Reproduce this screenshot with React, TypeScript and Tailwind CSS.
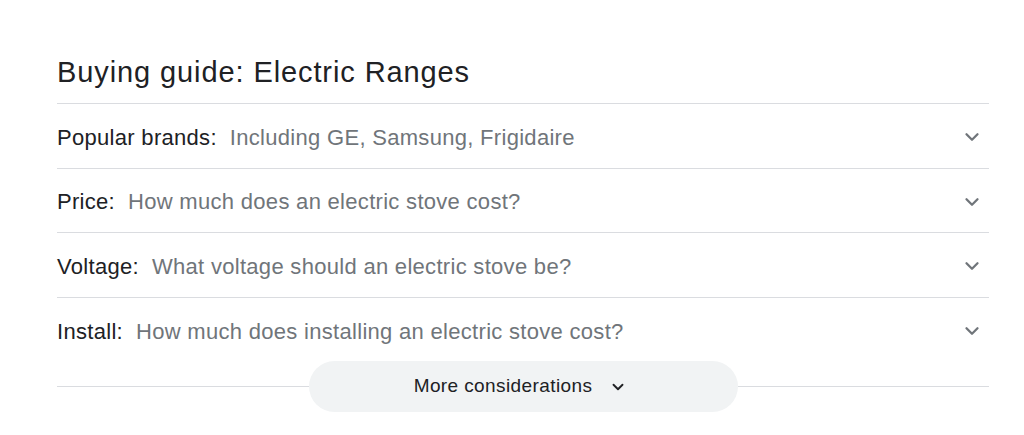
import { ChevronDown } from 'lucide-react';

const ROWS = [
  { label: 'Popular brands:', text: 'Including GE, Samsung, Frigidaire' },
  { label: 'Price:', text: 'How much does an electric stove cost?' },
  { label: 'Voltage:', text: 'What voltage should an electric stove be?' },
  { label: 'Install:', text: 'How much does installing an electric stove cost?' },
];

export default function App() {
  return (
    <div
      className="w-[1024px] h-[435px] bg-white pl-[57px] pr-[35px] pt-[54px]"
      style={{ fontFamily: '"Liberation Sans", Arial, sans-serif' }}
    >
      {/* title */}
      <h2 className="text-[29px] leading-[36px] tracking-[0.9px] text-[#202124] pb-[13px] border-b border-[#dadce0]">
        Buying guide: Electric Ranges
      </h2>

      {/* rows */}
      <div>
        {ROWS.map((row) => (
          <div
            key={row.label}
            className="flex items-center h-[64.5px] pt-[3px] border-b border-[#dadce0] last:border-b-0"
          >
            <span className="text-[22px] tracking-[0.3px] text-[#202124]">{row.label}</span>
            <span className="text-[22px] tracking-[0.3px] text-[#70757a] ml-[13px] flex-1">{row.text}</span>
            <ChevronDown className="w-[22px] h-[22px] text-[#70757a] mr-[6px]" strokeWidth={2.5} />
          </div>
        ))}
      </div>

      {/* more considerations */}
      <div className="flex items-center mt-[-1px]">
        <div className="flex-1 h-px bg-[#dadce0]" />
        <button
          type="button"
          className="w-[429px] h-[51px] rounded-full bg-[#f1f3f4] flex items-center justify-center gap-[17px] pr-[5px] text-[19px] tracking-[0.4px] text-[#202124]"
        >
          More considerations
          <ChevronDown className="w-[18px] h-[18px] text-[#202124]" strokeWidth={2.5} />
        </button>
        <div className="flex-1 h-px bg-[#dadce0]" />
      </div>
    </div>
  );
}
